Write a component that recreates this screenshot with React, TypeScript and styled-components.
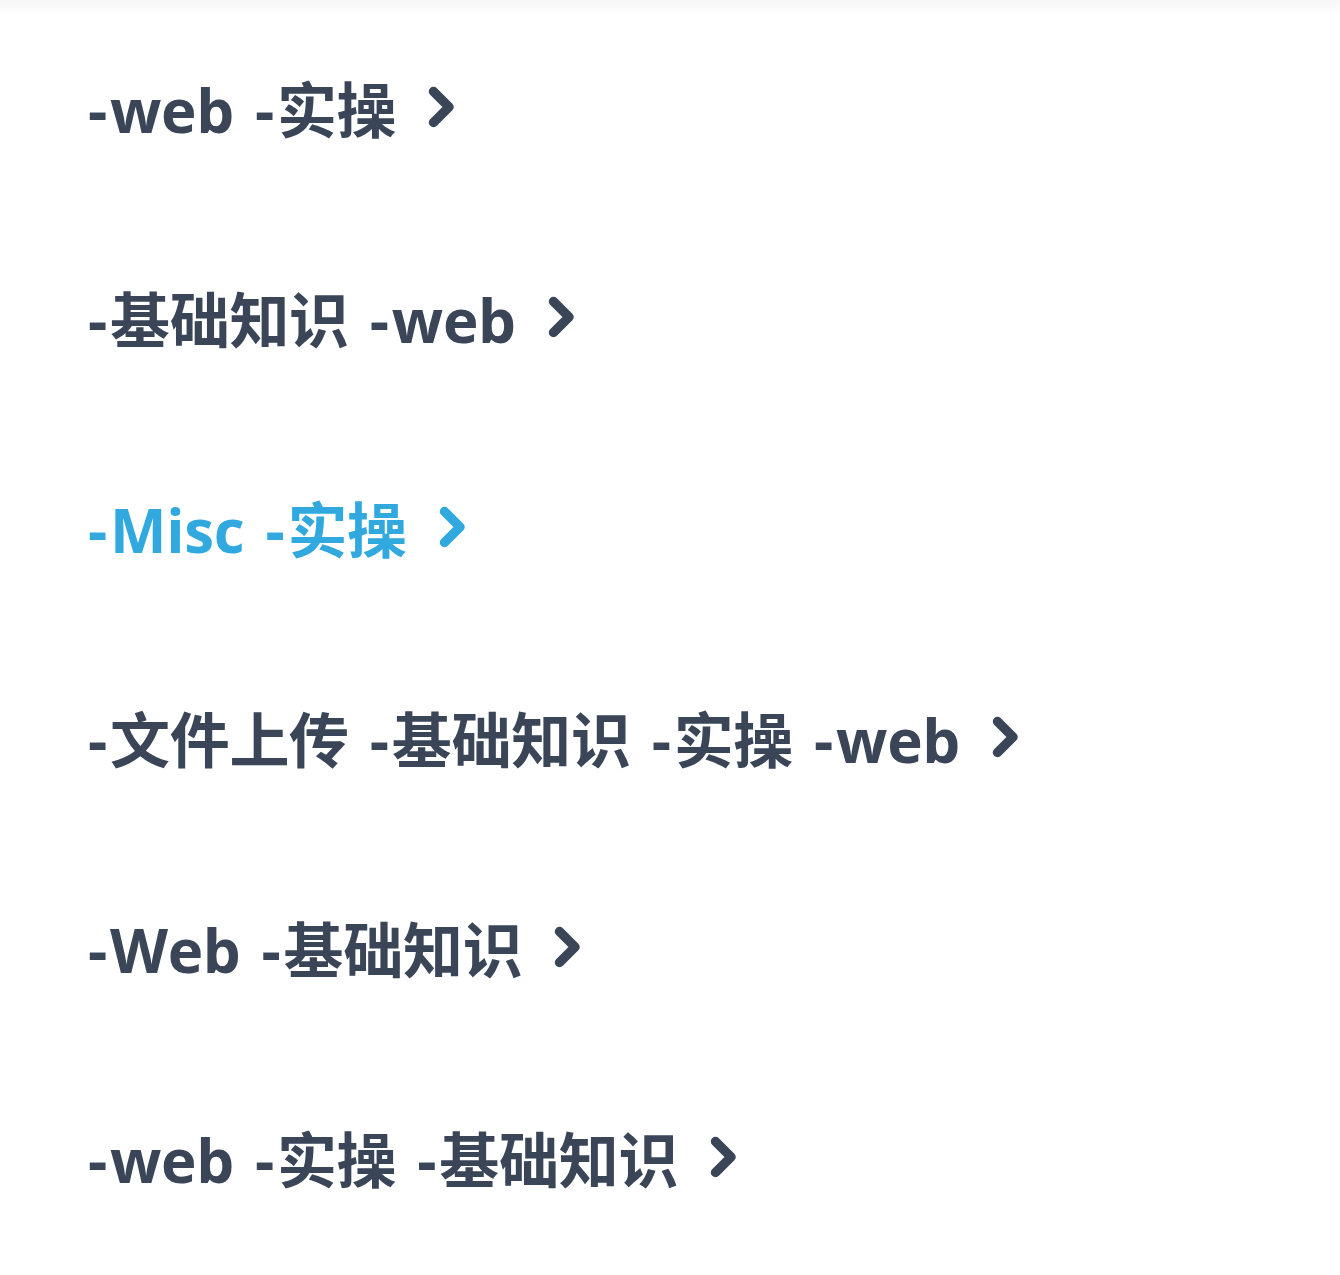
import React from "react";
import styled, { createGlobalStyle } from "styled-components";

const GlobalStyle = createGlobalStyle`
  html, body {
    margin: 0;
    padding: 0;
    background: #ffffff;
  }
  body {
    font-family: "Open Sans", "Noto Sans CJK SC", sans-serif;
  }
`;

const Page = styled.div`
  width: 1340px;
  min-height: 1275px;
  background: #ffffff;
  position: relative;
`;

const TopShade = styled.div`
  position: absolute;
  left: 0;
  top: 0;
  right: 0;
  height: 16px;
  background: linear-gradient(#f6f6f6, rgba(255, 255, 255, 0));
  pointer-events: none;
`;

const List = styled.ul`
  list-style: none;
  margin: 0;
  padding: 5px 0 0 88px;
  display: flex;
  flex-direction: column;
`;

const Item = styled.li`
  height: 210px;
  display: flex;
  align-items: center;
`;

const Link = styled.a<{ $active?: boolean }>`
  display: inline-flex;
  align-items: center;
  gap: 21px;
  text-decoration: none;
  font-family: "Open Sans", "Noto Sans CJK SC", sans-serif;
  font-weight: 700;
  font-size: 60px;
  line-height: 1;
  letter-spacing: -0.3px;
  color: ${(p) => (p.$active ? "#31a9df" : "#3a4658")};
  white-space: pre;
`;

const Tag = styled.span`
  display: inline-flex;
  align-items: baseline;
`;

const Dash = styled.span`
  margin-right: 3px;
`;

const Chevron = styled.svg`
  flex: none;
  margin-left: 11px;
  margin-top: -6px;
`;

const ChevronIcon = () => (
  <Chevron width="27" height="42" viewBox="0 0 27 42" aria-hidden="true">
    <path
      d="M5.5 5.5 L21 21 L5.5 36.5"
      fill="none"
      stroke="currentColor"
      strokeWidth="9.5"
      strokeLinecap="round"
      strokeLinejoin="round"
    />
  </Chevron>
);

const items: { tags: string[]; active?: boolean }[] = [
  { tags: ["web", "实操"] },
  { tags: ["基础知识", "web"] },
  { tags: ["Misc", "实操"], active: true },
  { tags: ["文件上传", "基础知识", "实操", "web"] },
  { tags: ["Web", "基础知识"] },
  { tags: ["web", "实操", "基础知识"] },
];

export default function App() {
  return (
    <Page>
      <GlobalStyle />
      <TopShade />
      <List>
        {items.map((it) => (
          <Item key={it.tags.join("-")}>
            <Link href="#" $active={it.active}>
              {it.tags.map((t) => (
                <Tag key={t}>
                  <Dash>-</Dash>
                  {t}
                </Tag>
              ))}
              <ChevronIcon />
            </Link>
          </Item>
        ))}
      </List>
    </Page>
  );
}
